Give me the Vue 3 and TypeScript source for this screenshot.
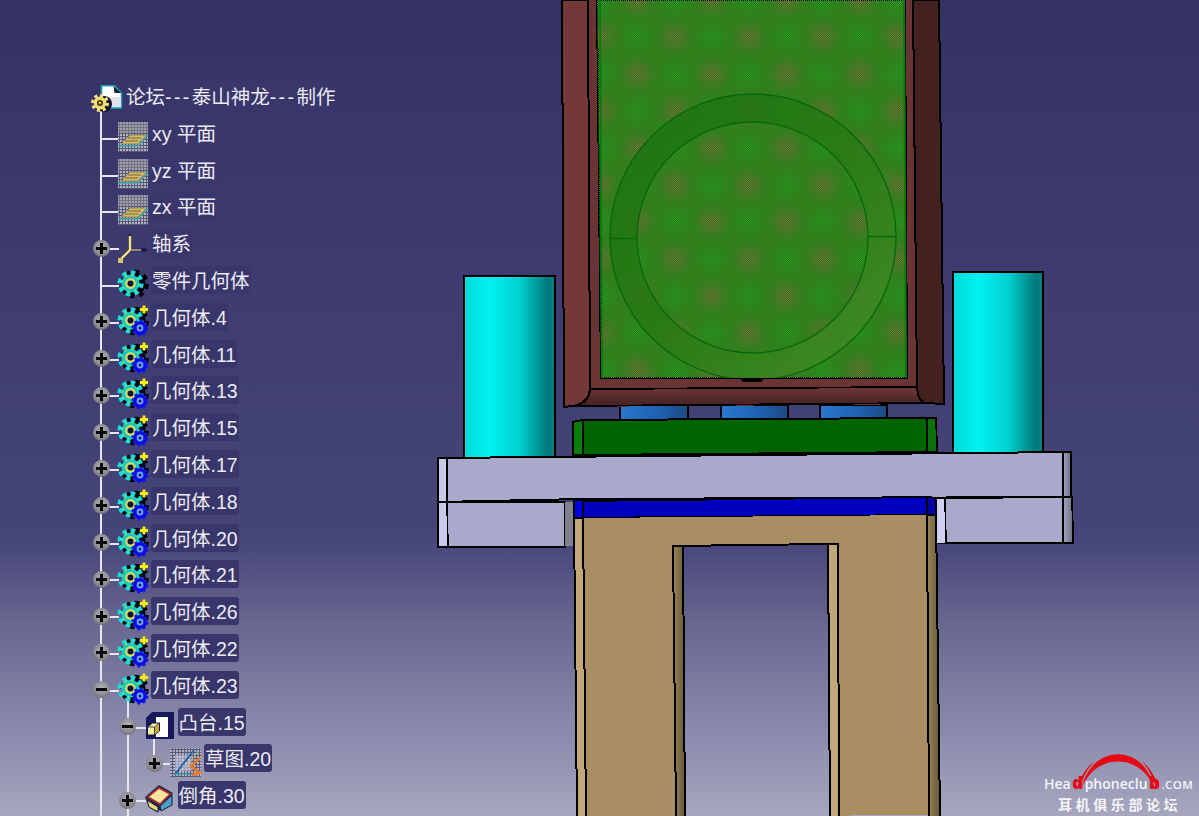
<script setup lang="ts">
type IconName = 'root' | 'plane' | 'axis' | 'body' | 'bodyAdd' | 'pad' | 'sketch' | 'chamfer'
type Rail = { col: number; span: 'full' | 'down' | 'up' }
type Row = {
  label: string
  depth: number
  icon: IconName
  toggle?: '+' | '-'
  rails: Rail[]
}

const main: Rail = { col: 0, span: 'full' }
const second: Rail = { col: 1, span: 'full' }

const bodies = ['4', '11', '13', '15', '17', '18', '20', '21', '26', '22']

const rows: Row[] = [
  { label: '论坛---泰山神龙---制作', depth: 0, icon: 'root', rails: [{ col: 0, span: 'down' }] },
  { label: 'xy 平面', depth: 1, icon: 'plane', rails: [main] },
  { label: 'yz 平面', depth: 1, icon: 'plane', rails: [main] },
  { label: 'zx 平面', depth: 1, icon: 'plane', rails: [main] },
  { label: '轴系', depth: 1, icon: 'axis', toggle: '+', rails: [main] },
  { label: '零件几何体', depth: 1, icon: 'body', rails: [main] },
  ...bodies.map((n): Row => ({
    label: `几何体.${n}`,
    depth: 1,
    icon: 'bodyAdd',
    toggle: '+',
    rails: [main],
  })),
  { label: '几何体.23', depth: 1, icon: 'bodyAdd', toggle: '-', rails: [main, { col: 1, span: 'down' }] },
  { label: '凸台.15', depth: 2, icon: 'pad', toggle: '-', rails: [main, second, { col: 2, span: 'down' }] },
  { label: '草图.20', depth: 3, icon: 'sketch', toggle: '+', rails: [main, second, { col: 2, span: 'up' }] },
  { label: '倒角.30', depth: 2, icon: 'chamfer', toggle: '+', rails: [main, second] },
]

const colX = (col: number) => 101 + col * 26.5
const rowPad = (depth: number) => (depth === 0 ? 91 : 117 + (depth - 1) * 26.5)
const parts = (label: string) => label.split(/(---)/)
</script>

<template>
  <main class="viewport">
    <nav class="tree">
      <div
        v-for="row in rows"
        :key="row.label"
        class="row"
        :style="{ paddingLeft: rowPad(row.depth) + 'px' }"
      >
        <i
          v-for="rail in row.rails"
          :key="rail.col"
          class="rail"
          :class="rail.span"
          :style="{ left: colX(rail.col) - 1 + 'px' }"
        ></i>
        <i v-if="row.depth" class="elbow" :style="{ left: colX(row.depth - 1) + 'px' }"></i>
        <span v-if="row.toggle" class="toggle" :style="{ left: colX(row.depth - 1) - 8.5 + 'px' }">
          <b class="bar"></b>
          <b v-if="row.toggle === '+'" class="bar upright"></b>
        </span>

        <svg class="icon" viewBox="0 0 32 32" width="32" height="32">
          <template v-if="row.icon === 'root'">
            <path d="M10.500 .8h13l7 7V23H10.500z" fill="#fff" stroke="#17a0b0" stroke-width="1.6" />
            <path d="M22.500 1l1 7h7z" fill="#16243c" />
            <path d="M16 12h14v10H16z" fill="#e2e2ec" />
            <circle cx="13" cy="19" r="8" fill="#15152f" />
            <circle cx="9" cy="18" r="7.400" fill="none" stroke="#f6e67c" stroke-width="3.200" stroke-dasharray="3 2.800" />
            <circle cx="9" cy="18" r="6.400" fill="#f2de72" />
            <circle cx="9" cy="18" r="3" fill="#3a3410" />
            <circle cx="9" cy="18" r="1.400" fill="#d8c850" />
          </template>

          <template v-else-if="row.icon === 'plane'">
            <rect x="1" y="0" width="30" height="30" fill="url(#iconDots)" />
            <rect x="1" y="0" width="30" height="11" fill="#8a8a94" opacity=".5" />
            <path d="M4 22l9-9h17l-9 9z" fill="#d2b868" stroke="#6a6a40" stroke-width=".6" />
            <path d="M8 19h13M11 16h13" stroke="#5a5630" stroke-width=".8" />
            <path d="M1 24h20l10-11" fill="none" stroke="#3fb0b0" stroke-width="1.400" />
          </template>

          <template v-else-if="row.icon === 'axis'">
            <path d="M13 18V3M13 18L3 28" stroke="#3c3a28" stroke-width="3.800" fill="none" />
            <path d="M13 18H28" stroke="#1c1c50" stroke-width="2.600" />
            <path d="M13 18V3M13 18L4 27" stroke="#f0e09a" stroke-width="2.400" fill="none" />
            <path d="M13 18H24" stroke="#e6d690" stroke-width="1.200" />
            <path d="M13 0l-3 4h6z" fill="#2a2a5a" />
            <path d="M31 18l-5-3v6z" fill="#1c1c50" />
            <rect x="1" y="26" width="5" height="5" fill="#d8c468" />
          </template>

          <template v-else-if="row.icon === 'body'">
            <use href="#gear" />
          </template>

          <template v-else-if="row.icon === 'bodyAdd'">
            <use href="#gear" />
            <circle cx="23" cy="22" r="7" fill="#0c0ce0" />
            <circle cx="23" cy="22" r="7.200" fill="none" stroke="#1414f4" stroke-width="2.600" stroke-dasharray="2.600 3" />
            <circle cx="23" cy="22" r="3.400" fill="#6aa8ff" />
            <circle cx="23" cy="22" r="1.500" fill="#0c0c80" />
            <path d="M23 3.500h8M27 -.5v8" stroke="#f6ee10" stroke-width="2.800" />
          </template>

          <template v-else-if="row.icon === 'pad'">
            <path d="M8 1h22v27H2V7z" fill="#17175e" />
            <path d="M12 6h12v20H12z" fill="#fff" />
            <path d="M3.500 16l5-4h7v8l-5 4h-7z" fill="#f6ee9a" stroke="#14143c" stroke-width="1" />
            <path d="M3.500 16h7v8M10.500 16l5-4" fill="none" stroke="#14143c" stroke-width=".8" />
            <path d="M11 16.500l4-3.400v6.500l-4 3.400z" fill="#c8a830" />
          </template>

          <template v-else-if="row.icon === 'sketch'">
            <rect x="0" y="1" width="31" height="29" fill="url(#iconDots)" />
            <rect x="5" y="8" width="16" height="16" fill="#c8c8e4" opacity=".6" />
            <path d="M6 26L24 3" stroke="#1c5fb0" stroke-width="1.800" />
            <path d="M10 26L28 5" stroke="#d8d060" stroke-width="1" stroke-dasharray="2 1.600" />
            <path d="M30 11l-9 8 9 7-8 2" fill="none" stroke="#ef7a22" stroke-width="2.400" />
            <path d="M3 27h17" stroke="#2fa0a8" stroke-width="1.400" />
          </template>

          <template v-else>
            <path d="M1 13L15 1l14 8-11 16-6 3L3 18z" fill="#2a2a44" />
            <path d="M4 13L15 4l11 6-10 10z" fill="#fbe59e" stroke="#b8302a" stroke-width="1.600" />
            <path d="M16 22l12-11v10l-11 6z" fill="#4aa0c8" stroke="#15153a" stroke-width="1" />
            <path d="M3 16l11 7v5l-9-5z" fill="#e8d880" stroke="#15153a" stroke-width="1" />
          </template>
        </svg>

        <span class="label">
          <template v-for="(part, i) in parts(row.label)" :key="i">
            <span v-if="part === '---'" class="dashes">{{ part }}</span>
            <template v-else>{{ part }}</template>
          </template>
        </span>
      </div>
    </nav>

    <svg class="drawing" viewBox="430 0 769 816" width="769" height="816">
      <defs>
        <pattern id="iconDots" width="3" height="3" patternUnits="userSpaceOnUse">
          <rect width="3" height="3" fill="#5a5878" />
          <rect width="2" height="2" fill="#b4b4c0" />
        </pattern>
        <g id="gear">
          <circle cx="17" cy="15" r="11.500" fill="#04041a" />
          <circle cx="17.500" cy="15" r="12" fill="none" stroke="#000" stroke-width="4.600" stroke-dasharray="4.600 4.800" />
          <circle cx="13.500" cy="14.500" r="10.500" fill="none" stroke="#16dede" stroke-width="5.200" stroke-dasharray="4.200 4.050" />
          <circle cx="13.500" cy="14.500" r="9" fill="#12c6d4" />
          <circle cx="13.500" cy="14.500" r="8.400" fill="none" stroke="#84dc44" stroke-width="1.400" stroke-dasharray="3 3.600" />
          <circle cx="13.500" cy="14.500" r="5.400" fill="#d4dc58" />
          <circle cx="13.500" cy="14.500" r="3" fill="#10143a" />
        </g>

        <linearGradient id="cylinder">
          <stop offset="0" stop-color="#00d9d9" />
          <stop offset=".28" stop-color="#00f2f2" />
          <stop offset=".62" stop-color="#00cfcf" />
          <stop offset=".92" stop-color="#007a7a" />
          <stop offset="1" stop-color="#008484" />
        </linearGradient>
        <linearGradient id="feet">
          <stop offset="0" stop-color="#2a78d0" />
          <stop offset=".6" stop-color="#1d5fae" />
          <stop offset="1" stop-color="#1c4a80" />
        </linearGradient>
        <linearGradient id="frameBottom" x1="0" y1="0" x2="0" y2="1">
          <stop offset="0" stop-color="#703636" />
          <stop offset="1" stop-color="#432121" />
        </linearGradient>
        <linearGradient id="plateEnd">
          <stop offset="0" stop-color="#a4a4c4" />
          <stop offset="1" stop-color="#6f6f80" />
        </linearGradient>
        <linearGradient id="legShade">
          <stop offset="0" stop-color="#9a8458" />
          <stop offset="1" stop-color="#66583a" />
        </linearGradient>
        <linearGradient id="ringShade" x1=".12" y1=".12" x2=".88" y2=".88">
          <stop offset="0" stop-color="#1c7410" />
          <stop offset=".5" stop-color="#287a14" />
          <stop offset="1" stop-color="#408a24" />
        </linearGradient>
        <linearGradient id="bgSlice" gradientUnits="userSpaceOnUse" x1="0" y1="0" x2="0" y2="816">
          <stop offset="0" stop-color="#343265" />
          <stop offset=".66" stop-color="#46457a" />
          <stop offset=".78" stop-color="#6c6c93" />
          <stop offset=".9" stop-color="#8b8bae" />
          <stop offset="1" stop-color="#a6a6be" />
        </linearGradient>

        <radialGradient id="redSpot">
          <stop offset="0" stop-color="#b85a58" stop-opacity=".62" />
          <stop offset="1" stop-color="#b85a58" stop-opacity="0" />
        </radialGradient>
        <radialGradient id="greenSpot">
          <stop offset="0" stop-color="#14b420" stop-opacity=".6" />
          <stop offset="1" stop-color="#14b420" stop-opacity="0" />
        </radialGradient>
        <pattern id="spots" x="656.5" y="203.5" width="74" height="74" patternUnits="userSpaceOnUse">
          <circle cx="18.5" cy="18.5" r="18.5" fill="url(#greenSpot)" />
          <circle cx="55.5" cy="18.5" r="18.5" fill="url(#redSpot)" />
          <circle cx="18.5" cy="55.5" r="18.5" fill="url(#redSpot)" />
          <circle cx="55.5" cy="55.5" r="18.5" fill="url(#greenSpot)" />
        </pattern>
        <pattern id="dither" width="2" height="2" patternUnits="userSpaceOnUse">
          <rect width="1" height="1" fill="#fff" />
          <rect x="1" y="1" width="1" height="1" fill="#fff" />
        </pattern>
        <mask id="ditherMask" maskUnits="userSpaceOnUse" x="590" y="0" width="330" height="390">
          <rect x="590" y="0" width="330" height="390" fill="url(#dither)" />
        </mask>
        <clipPath id="screen">
          <polygon points="597,0 905,0 907,378 601,378" />
        </clipPath>
      </defs>

      <g class="solid">
        <!-- cylinders -->
        <rect x="464" y="276" width="91" height="182" fill="url(#cylinder)" stroke="#000" stroke-width="2" />
        <rect x="953" y="272" width="90" height="182" fill="url(#cylinder)" stroke="#000" stroke-width="2" />

        <!-- feet under the frame -->
        <rect x="620" y="405" width="68" height="15" fill="url(#feet)" stroke="#000" stroke-width="1.6" />
        <rect x="721" y="405" width="67" height="15" fill="url(#feet)" stroke="#000" stroke-width="1.6" />
        <rect x="820" y="405" width="67" height="15" fill="url(#feet)" stroke="#000" stroke-width="1.6" />

        <!-- frame -->
        <polygon points="561,0 940,0 944,404 565,407" fill="#6b3434" />
        <path d="M562 0H588L590 386Q590 404 572 406L564 407z" fill="#733939" stroke="#000" stroke-width="2" />
        <path d="M590 389L917 387Q918 402 926 403L572 406Q590 404 590 389z" fill="url(#frameBottom)" stroke="#000" stroke-width="1.8" />
        <path d="M913 0H939L944 404L926 403Q918 402 917 387z" fill="#43211f" stroke="#000" stroke-width="2" />
        <polygon points="597,0 905,0 907,378 601,378" fill="#2c7b18" stroke="#000" stroke-width="2" />
      </g>

      <!-- dithered screen on the frame -->
      <g clip-path="url(#screen)">
        <rect class="solid" x="597" y="0" width="312" height="380" fill="#358420" mask="url(#ditherMask)" />
        <rect class="solid" x="597" y="0" width="312" height="380" fill="url(#spots)" mask="url(#ditherMask)" />
        <path
          d="M610 237a143 143 0 1 0 286 0a143 143 0 1 0 -286 0zM637 237.500a115.500 115.500 0 1 1 231 0a115.500 115.500 0 1 1 -231 0z"
          fill="url(#ringShade)"
          fill-opacity=".85"
          fill-rule="evenodd"
          stroke="#08680c"
          stroke-width="1.4"
        />
        <path d="M610 238.500H637M869 236.500H896" stroke="#08680c" stroke-width="1.6" />
        <path d="M600 0L602 378M904 0L906 378" stroke="#0a7a10" stroke-width="2" />
      </g>
      <path d="M740 379h24l-3 3h-18z" fill="#000" />

      <g class="solid">
        <!-- green slab -->
        <polygon points="583,420 927,418 936,418 937,452 583,455 573,455 573,422" fill="#006400" stroke="#000" stroke-width="2" />
        <polygon points="573,422 583,420 583,455 573,455" fill="#0b7d0b" stroke="#000" stroke-width="1.6" />
        <polygon points="927,418 936,418 937,452 927,452" fill="#0b700b" stroke="#000" stroke-width="1.6" />

        <!-- plate, lower blocks -->
        <polygon points="438,502 565,502 565,547 438,547" fill="#a9a9cb" stroke="#000" stroke-width="2" />
        <rect x="565" y="502" width="10" height="44" fill="#80808f" />
        <polygon points="438,502 447,502 448,547 438,547" fill="#c9c9ea" stroke="#000" stroke-width="1.6" />
        <polygon points="937,498 1072,497 1073,543 937,543" fill="#a9a9cb" stroke="#000" stroke-width="2" />
        <polygon points="937,498 945,498 946,543 937,543" fill="#d0d0f0" />
        <path d="M945 498L946 543" stroke="#000" stroke-width="1.6" />
        <polygon points="1063,497 1072,497 1073,543 1063,543" fill="url(#plateEnd)" stroke="#000" stroke-width="1.6" />

        <!-- plate, top -->
        <polygon points="438,458 1071,452 1071,497 583,499 438,502" fill="#a9a9cb" stroke="#000" stroke-width="2" />
        <polygon points="438,458 447,458 447,502 438,502" fill="#c9c9ea" stroke="#000" stroke-width="1.6" />
        <polygon points="1063,452 1071,452 1071,497 1063,497" fill="url(#plateEnd)" stroke="#000" stroke-width="1.6" />

        <!-- blue band -->
        <polygon points="574,501 927,497 936,498 936,515 574,518" fill="#0000c0" stroke="#000" stroke-width="2" />
        <polygon points="574,501 583,500 583,518 574,518" fill="#0000e4" stroke="#000" stroke-width="1.4" />
        <polygon points="927,497 936,498 936,515 927,515" fill="#0000a4" stroke="#000" stroke-width="1.4" />

        <!-- tan frame -->
        <polygon points="583,518 927,515 938,815 586,817" fill="#a88e62" />
        <polygon points="574,518 583,518 586,817 577,817" fill="#c0a878" stroke="#000" stroke-width="2" />
        <polygon points="927,515 936,515 940,817 929,817" fill="url(#legShade)" stroke="#000" stroke-width="2" />
        <polygon points="683,546 828,544 830,817 685,817" fill="url(#bgSlice)" />
        <polygon points="673,546 683,546 685,817 676,817" fill="url(#legShade)" stroke="#000" stroke-width="2" />
        <polygon points="828,544 838,544 839,817 830,817" fill="#c0a878" stroke="#000" stroke-width="2" />
        <path d="M673 546L828 544" stroke="#000" stroke-width="2" />
      </g>
    </svg>

    <aside class="logo">
      <svg class="phones" viewBox="0 0 90 38" width="84" height="36">
        <path d="M6 38C12 14 28 2 45 2C62 2 78 14 84 38C76 20 62 10 45 10C28 10 14 20 6 38z" fill="#e60a14" />
        <path d="M1 38C6 24 12 15 19 10C13 17 8 26 4 38zM89 38C84 24 78 15 71 10C77 17 82 26 86 38z" fill="#e60a14" />
      </svg>
      <div class="word">Hea<em>d</em>phoneclu<em>b</em><small>.COM</small></div>
      <div class="cn">耳机俱乐部论坛</div>
    </aside>
  </main>
</template>

<style scoped>
.viewport {
  position: relative;
  display: flex;
  width: 1199px;
  height: 816px;
  overflow: hidden;
  background: linear-gradient(180deg, #343265 0, #46457a 66%, #6c6c93 78%, #8b8bae 90%, #a6a6be 100%);
}

.tree {
  flex: none;
  width: 430px;
  padding-top: 82.6px;
  font-family: "Liberation Sans", "Noto Sans CJK SC", sans-serif;
  font-size: 19.5px;
  color: #ecebf2;
}

.row {
  position: relative;
  display: flex;
  align-items: center;
  gap: 2px;
  height: 36.8px;
}

.rail {
  position: absolute;
  top: 0;
  bottom: 0;
  width: 2px;
  background: #e6e6f0;
}
.rail.down {
  top: 50%;
}
.rail.up {
  bottom: 50%;
}

.elbow {
  position: absolute;
  top: 50%;
  width: 18px;
  height: 2px;
  background: #e6e6f0;
}

.toggle {
  position: absolute;
  top: calc(50% - 8.500px);
  width: 17px;
  height: 17px;
  border-radius: 50%;
  background: radial-gradient(circle at 50% 40%, #b4b4b8 0, #8c8c90 55%, #56565c 100%);
}
.bar {
  position: absolute;
  left: 3px;
  top: 7px;
  width: 11px;
  height: 3px;
  background: #08080c;
}
.bar.upright {
  left: 7px;
  top: 3px;
  width: 3px;
  height: 11px;
}

.icon {
  position: relative;
  flex: none;
  overflow: visible;
}

.label {
  position: relative;
  height: 28px;
  margin-top: -10px;
  padding: 0 1px;
  border-radius: 3px;
  line-height: 30px;
  white-space: nowrap;
  background: #38366b;
}
.dashes {
  letter-spacing: 2.400px;
}

.drawing {
  flex: none;
  display: block;
}
.solid {
  shape-rendering: crispEdges;
}

.logo {
  position: absolute;
  left: 1040px;
  top: 750px;
  width: 159px;
  height: 66px;
  font-family: "Open Sans", "Noto Sans CJK SC", sans-serif;
  color: #f4f4f8;
}
.phones {
  position: absolute;
  left: 36px;
  top: 2px;
}
.word {
  position: absolute;
  left: 4px;
  top: 26px;
  font-size: 14px;
  line-height: 16px;
  font-weight: 600;
  white-space: nowrap;
}
.word em {
  font-style: normal;
  font-weight: 800;
  font-size: 17px;
  line-height: 14px;
  margin: 0 1.500px;
  color: #e60a14;
}
.word small {
  font-size: 11.500px;
  letter-spacing: .4px;
}
.cn {
  position: absolute;
  left: 18px;
  top: 46px;
  font-size: 14px;
  line-height: 18px;
  font-weight: 700;
  letter-spacing: 3.600px;
  white-space: nowrap;
}
</style>

<style>
html,
body {
  margin: 0;
  overflow: hidden;
}
</style>
